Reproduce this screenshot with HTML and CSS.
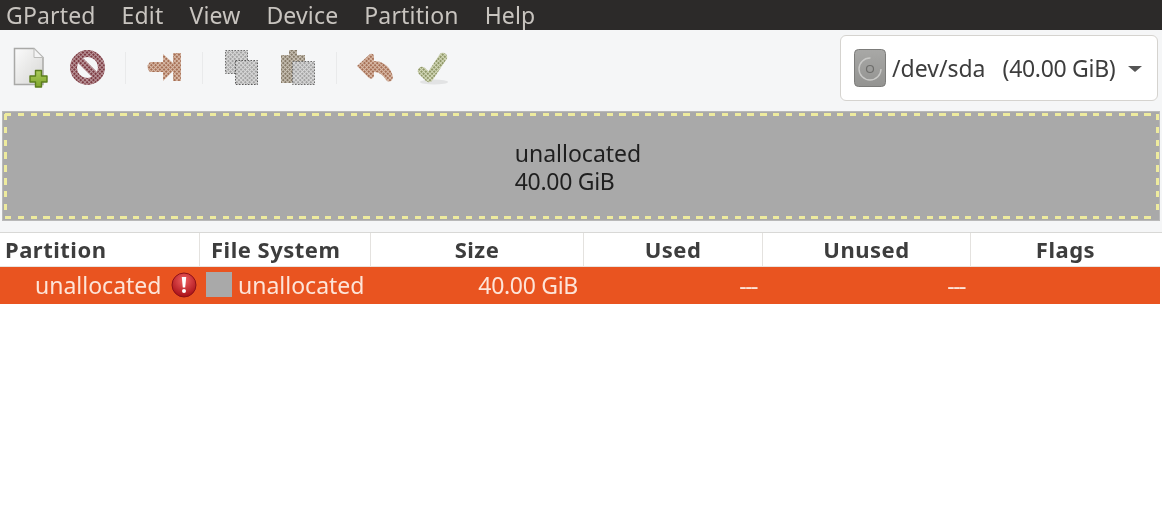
FILE: index.html
```html
<!DOCTYPE html>
<html lang="en">
<head>
<meta charset="utf-8">
<title>GParted</title>
<link rel="stylesheet" href="styles.css">
</head>
<body>
<svg class="defs" width="0" height="0" aria-hidden="true">
  <defs>
    <pattern id="d-red" width="3" height="3" patternUnits="userSpaceOnUse" patternTransform="rotate(45)"><rect width="3" height="3" fill="#b99599"/><rect width="2" height="2" fill="#7c3a42"/></pattern>
    <pattern id="d-brown" width="3" height="3" patternUnits="userSpaceOnUse" patternTransform="rotate(45)"><rect width="3" height="3" fill="#d8b9a6"/><rect width="2" height="2" fill="#a56f55"/></pattern>
    <pattern id="d-grey" width="3" height="3" patternUnits="userSpaceOnUse" patternTransform="rotate(45)"><rect width="3" height="3" fill="#d8d8d8"/><rect width="2" height="2" fill="#a3a3a3"/></pattern>
    <pattern id="d-tan" width="3" height="3" patternUnits="userSpaceOnUse" patternTransform="rotate(45)"><rect width="3" height="3" fill="#c9c1b4"/><rect width="2" height="2" fill="#857a68"/></pattern>
    <pattern id="d-green" width="3" height="3" patternUnits="userSpaceOnUse" patternTransform="rotate(45)"><rect width="3" height="3" fill="#d3d8b8"/><rect width="2" height="2" fill="#8f9768"/></pattern>
    <radialGradient id="err" cx="50%" cy="30%" r="70%"><stop offset="0" stop-color="#f06060"/><stop offset="1" stop-color="#a80f17"/></radialGradient>
    <linearGradient id="page" x1="0" y1="0" x2="1" y2="1"><stop offset="0" stop-color="#fbfbfb"/><stop offset="1" stop-color="#d6d6d4"/></linearGradient>
    <linearGradient id="plus" x1="0" y1="0" x2="0" y2="1"><stop offset="0" stop-color="#aacb5c"/><stop offset="1" stop-color="#7fa62c"/></linearGradient>
    <linearGradient id="disk" x1="0" y1="0" x2="0" y2="1"><stop offset="0" stop-color="#a8a8a6"/><stop offset="1" stop-color="#939391"/></linearGradient>
  </defs>
</svg>
<div class="window">
  <nav class="menubar">
    <span class="menu-item">GParted</span>
    <span class="menu-item">Edit</span>
    <span class="menu-item">View</span>
    <span class="menu-item">Device</span>
    <span class="menu-item">Partition</span>
    <span class="menu-item">Help</span>
  </nav>
  <div class="toolbar">
    <div class="tool-group">
      <svg class="tool-icon" viewBox="0 0 38 38">
        <path d="M3.500 -.5H23L32 8.500V35.500H3.500Z" fill="url(#page)" stroke="#a9a9a7" stroke-width="1.500"/>
        <path d="M23 -.5V8.500H32Z" fill="#f4f4f4" stroke="#bcbcba" stroke-width="1"/>
        <path d="M24.500 21.500h6v5.500h5.500v6h-5.500v5h-6v-5H19v-6h5.500z" fill="url(#plus)" stroke="#5b7d1d" stroke-width="1.400" stroke-linejoin="round"/>
      </svg>
      <svg class="tool-icon" viewBox="0 0 38 38">
        <circle cx="19.500" cy="18.500" r="14" fill="none" stroke="url(#d-red)" stroke-width="7"/>
        <path d="M9.500 8.500L29.500 28.500" stroke="url(#d-red)" stroke-width="7" fill="none"/>
      </svg>
    </div>
    <span class="tool-sep"></span>
    <div class="tool-group">
      <svg class="tool-icon" viewBox="0 0 38 38">
        <path d="M5 13H18V5L28 14V4H36V32H28V22L18 32V23H5Q0 18 5 13Z" fill="url(#d-brown)" stroke-linejoin="round"/>
      </svg>
    </div>
    <span class="tool-sep"></span>
    <div class="tool-group">
      <svg class="tool-icon" viewBox="0 0 38 38">
        <rect x="3.500" y="1.500" width="22" height="23" fill="url(#d-grey)" stroke="#6e6e6e" stroke-width="1" stroke-dasharray="1.500 1.500"/>
        <rect x="13.500" y="11.500" width="22" height="24" fill="url(#d-grey)" stroke="#5c5c5c" stroke-width="1" stroke-dasharray="1.500 1.500"/>
      </svg>
      <svg class="tool-icon" viewBox="0 0 38 38">
        <path d="M2 6H10V1H18V6H26V34H2Z" fill="url(#d-tan)"/>
        <rect x="13.500" y="12.500" width="22" height="23" fill="url(#d-grey)" stroke="#6e6e6e" stroke-width="1" stroke-dasharray="1.500 1.500"/>
      </svg>
    </div>
    <span class="tool-sep"></span>
    <div class="tool-group">
      <svg class="tool-icon" viewBox="0 0 38 38">
        <path d="M1 17L14 5Q18 4 18 8V12C27 12 35 18 37 28Q36 34 31 32C27 26 23 23 18 23V27Q17 31 13 29Z" fill="url(#d-brown)"/>
      </svg>
      <svg class="tool-icon" viewBox="0 0 38 38">
        <ellipse cx="21" cy="33" rx="14" ry="2.500" fill="#e2e3e4"/>
        <path d="M9 22L16 29L30 8" fill="none" stroke="url(#d-green)" stroke-width="8.500" stroke-linecap="round" stroke-linejoin="round"/>
      </svg>
    </div>
    <div class="device-combo">
      <svg class="disk-icon" viewBox="0 0 32 38">
        <rect x=".5" y=".5" width="31" height="37" rx="4" fill="url(#disk)" stroke="#7c7c7a"/>
        <circle cx="16" cy="20" r="11" fill="none" stroke="#c9c9c7" stroke-width="1.400" stroke-dasharray="52 17"/>
        <circle cx="16" cy="20" r="3.500" fill="none" stroke="#6d6d6b" stroke-width="1.200"/>
      </svg>
      <span class="device-label"><span class="device-name">/dev/sda</span><span class="device-size">(40.00 GiB)</span></span>
      <span class="caret"></span>
    </div>
  </div>
  <section class="disk-map">
    <div class="map-block">
      <div class="map-label">unallocated<br><span class="tight">40.00 GiB</span></div>
    </div>
  </section>
  <section class="table">
    <div class="table-row table-head">
      <div class="th th-left">Partition</div>
      <div class="th th-left">File System</div>
      <div class="th">Size</div>
      <div class="th">Used</div>
      <div class="th">Unused</div>
      <div class="th th-last">Flags</div>
    </div>
    <div class="table-row table-selected">
      <div class="td td-partition">
        <span>unallocated</span>
        <svg class="err-icon" viewBox="0 0 26 26">
          <circle cx="13" cy="13" r="12" fill="url(#err)" stroke="#8d1118"/>
          <path d="M10.800 5H15.200L14.200 15.500H11.800Z" fill="#fff"/>
          <circle cx="13" cy="19" r="2" fill="#fff"/>
        </svg>
      </div>
      <div class="td td-fs"><span class="fs-swatch"></span><span>unallocated</span></div>
      <div class="td td-num"><span class="tight">40.00 GiB</span></div>
      <div class="td td-num"><span class="dashes">---</span></div>
      <div class="td td-num"><span class="dashes">---</span></div>
      <div class="td"></div>
    </div>
  </section>
</div>
</body>
</html>
```
FILE: styles.css
```css
html, body {
  margin: 0;
  height: 100%;
  background: #fff;
}
body {
  font-family: "Noto Sans", "Open Sans", sans-serif;
  font-size: 23px;
  overflow: hidden;
}
.defs {
  position: absolute;
}
.window {
  display: flex;
  flex-direction: column;
  height: 514px;
  filter: blur(0.4px);
}
.menubar {
  display: flex;
  align-items: center;
  height: 30px;
  box-sizing: border-box;
  padding: 0 0 1px 6px;
  gap: 26px;
  background: #2c2a29;
  color: #c8c4bf;
  line-height: 26px;
  letter-spacing: 0.16px;
}
.toolbar {
  display: flex;
  align-items: center;
  height: 81px;
  box-sizing: border-box;
  padding: 0 4px 5px 11px;
  background: #f5f6f7;
}
.tool-group {
  display: flex;
  gap: 19px;
}
.tool-icon {
  display: block;
  width: 38px;
  height: 38px;
  overflow: visible;
}
.tool-sep {
  width: 1px;
  height: 32px;
  margin: 0 19px;
  background: #e9eaeb;
}
.device-combo {
  display: flex;
  align-items: center;
  box-sizing: border-box;
  width: 318px;
  height: 66px;
  margin-left: auto;
  padding: 0 15px 0 13px;
  background: #fff;
  border: 1px solid #d5d3cf;
  border-radius: 6px;
  color: #3d3d3d;
}
.disk-icon {
  flex: none;
  width: 32px;
  height: 38px;
}
.device-label {
  display: flex;
  gap: 17px;
  margin-left: 6px;
  white-space: nowrap;
}
.device-size {
  letter-spacing: -0.3px;
}
.caret {
  width: 0;
  height: 0;
  margin: 2px 0 0 auto;
  border-left: 7px solid transparent;
  border-right: 7px solid transparent;
  border-top: 6px solid #555;
}
.disk-map {
  height: 121px;
  box-sizing: border-box;
  padding: 0 2px 11px;
  background: #f5f6f7;
}
.map-block {
  display: flex;
  align-items: center;
  justify-content: center;
  height: 110px;
  box-sizing: border-box;
  padding: 1px 6px 0 0;
  border: 1px solid #b9b9b9;
  background-color: #a9a9a9;
  background-image:
    repeating-linear-gradient(90deg, #eeeb9e 0 6.500px, transparent 6.500px 12.800px),
    repeating-linear-gradient(90deg, #eeeb9e 0 6.500px, transparent 6.500px 12.800px),
    repeating-linear-gradient(180deg, #eeeb9e 0 6.500px, transparent 6.500px 12.800px),
    repeating-linear-gradient(180deg, #eeeb9e 0 6.500px, transparent 6.500px 12.800px);
  background-repeat: no-repeat;
  background-size: 1152px 3px, 1152px 3px, 3px 102px, 3px 102px;
  background-position: 2px 1px, 2px 104px, 1px 2px, 1153px 2px;
  color: #1f1f1f;
  line-height: 28px;
}
.tight {
  letter-spacing: -0.3px;
}
.table {
  flex: 1;
  background: #fff;
  border-top: 1px solid #d8d8d6;
}
.table-row {
  display: grid;
  grid-template-columns: 200px 171px 213px 179px 208px 189px;
  width: 1160px;
}
.table-head {
  height: 34px;
  font-weight: 700;
  font-size: 22px;
  letter-spacing: 0.5px;
  color: #3d3d3d;
  border-bottom: 1px solid #e8e4e0;
  box-sizing: border-box;
}
.th {
  display: flex;
  align-items: center;
  justify-content: center;
  padding-bottom: 2px;
  border-right: 1px solid #e4e2df;
}
.th-left {
  justify-content: flex-start;
  padding-left: 5px;
}
.th-left + .th-left {
  padding-left: 11px;
}
.th-last {
  border-right: 0;
}
.table-selected {
  height: 37px;
  background: #e95420;
  color: #fde4d8;
}
.td {
  display: flex;
  align-items: center;
  padding-bottom: 2px;
  box-sizing: border-box;
  white-space: nowrap;
}
.td-partition {
  padding-left: 35px;
  gap: 10px;
}
.err-icon {
  flex: none;
  width: 26px;
  height: 26px;
}
.td-fs {
  padding-left: 6px;
  gap: 6px;
}
.fs-swatch {
  flex: none;
  width: 26px;
  height: 25px;
  background: #a9a9a9;
}
.td-num {
  justify-content: flex-end;
  padding-right: 6px;
}
.dashes {
  letter-spacing: -1.500px;
}
```
